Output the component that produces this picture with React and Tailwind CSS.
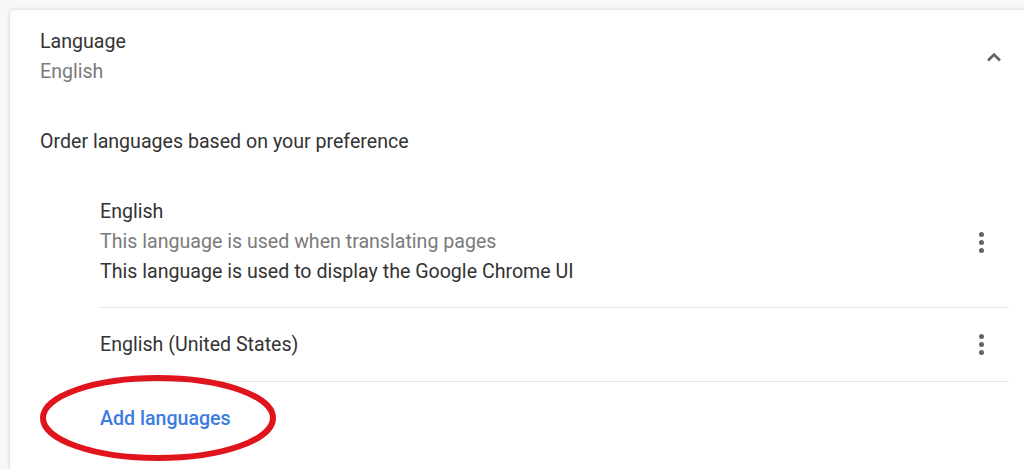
import React from 'react';

function Dots() {
  return (
    <div className="flex flex-col items-center gap-[3px] w-[24px]">
      <span className="block w-[5px] h-[5px] rounded-full bg-[#5f6368]" />
      <span className="block w-[5px] h-[5px] rounded-full bg-[#5f6368]" />
      <span className="block w-[5px] h-[5px] rounded-full bg-[#5f6368]" />
    </div>
  );
}

function LanguageRow({ name, lines, last }) {
  return (
    <div className={`flex items-center justify-between pr-[16px] ${last ? '' : 'border-b border-[#e6e6e6]'} ${lines ? 'pt-[12px] pb-[20px]' : 'h-[74px]'}`}>
      <div>
        <div className="text-[#333]">{name}</div>
        {lines && lines.map((l, i) => (
          <div key={i} className={i === 0 ? 'text-[#7a7a7a]' : 'text-[#333]'}>{l}</div>
        ))}
      </div>
      <Dots />
    </div>
  );
}

export default function App() {
  return (
    <div className="relative h-screen overflow-hidden bg-[#f6f7f9] pt-[9px] pl-[9px]" style={{ fontFamily: 'Roboto, "Noto Sans", sans-serif' }}>
      <div className="w-[1040px] h-[520px] bg-white rounded-tl-[6px] border border-[#e3e5e8] shadow-[0_0_3px_rgba(60,64,67,0.15)] pt-[17px] text-[19.6px] leading-[30px]">
        {/* Header */}
        <div className="flex items-center justify-between pl-[30px] pr-[44px]">
          <div>
            <div className="text-[#333]">Language</div>
            <div className="text-[#7a7a7a]">English</div>
          </div>
          <svg width="16" height="10" viewBox="0 0 16 10" className="mr-[2px]">
            <path d="M2 8.5 L8 2.5 L14 8.5" fill="none" stroke="#5f6368" strokeWidth="2.6" />
          </svg>
        </div>

        <div className="pl-[30px] mt-[40px] text-[#333]">Order languages based on your preference</div>

        {/* Language list */}
        <div className="ml-[90px] mr-[39px] mt-[28px]">
          <LanguageRow
            name="English"
            lines={[
              'This language is used when translating pages',
              'This language is used to display the Google Chrome UI',
            ]}
          />
          <LanguageRow name="English (United States)" />
          <div className="pt-[22px] font-medium text-[#3d7be0]">Add languages</div>
        </div>
      </div>

      {/* red annotation circle */}
      <svg className="absolute left-0 top-0 pointer-events-none" width="1024" height="469">
        <ellipse cx="158" cy="418" rx="115" ry="40" fill="none" stroke="#e0141c" strokeWidth="6" />
      </svg>
    </div>
  );
}
